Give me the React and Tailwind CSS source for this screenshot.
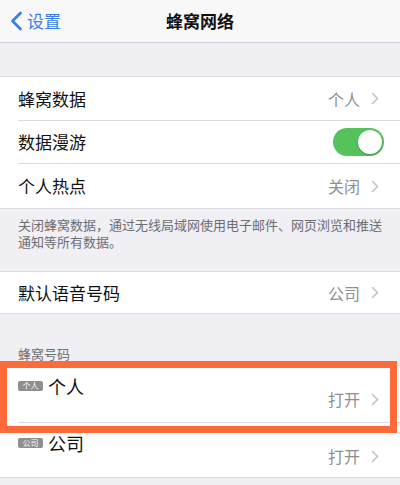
import React from 'react';

const font = { fontFamily: '"Noto Sans CJK SC", "Noto Sans", sans-serif' };

function Chevron() {
  return (
    <svg width="8" height="13" viewBox="0 0 8 13" className="ml-[11px]">
      <path d="M1.5 1.5 L6.5 6.5 L1.5 11.5" fill="none" stroke="#c4c4c8" strokeWidth="1.6" strokeLinecap="round" strokeLinejoin="round" />
    </svg>
  );
}

function Toggle() {
  return (
    <div className="w-[51px] h-[28px] rounded-full bg-[#55c25c] relative">
      <div className="absolute right-[2px] top-[2px] w-[24px] h-[24px] rounded-full bg-white shadow-[0_1px_2px_rgba(0,0,0,0.25)]" />
    </div>
  );
}

function Row({ label, value, toggle, last, height = 'h-[44px]' }) {
  return (
    <div className={`flex items-center pl-[18px] ${height}`}>
      <div className={`flex-1 flex items-center h-full ${toggle ? 'pr-[16px]' : 'pr-[21px]'} ${last ? '' : 'border-b border-[#dcdce0]'}`}>
        <span className="flex-1 text-[17px] text-[#111]">{label}</span>
        {toggle ? (
          <Toggle />
        ) : (
          <>
            <span className="text-[16px] text-[#8e8e93]">{value}</span>
            <Chevron />
          </>
        )}
      </div>
    </div>
  );
}

function LineRow({ tag, label, value, last, height }) {
  return (
    <div className={`pl-[18px] ${height}`}>
      <div className={`h-full pr-[21px] relative ${last ? '' : 'border-b border-[#dcdce0]'}`}>
        <div className="flex items-center pt-[9px]">
          <span className="w-[25px] h-[10px] rounded-[2px] bg-[#8e8e93] text-white text-[8px] leading-[10px] text-center mr-[5px]">{tag}</span>
          <span className="text-[18px] leading-[22px] text-[#111]">{label}</span>
        </div>
        <div className="absolute right-[21px] top-[22px] flex items-center">
          <span className="text-[16px] leading-[22px] text-[#8e8e93]">{value}</span>
          <Chevron />
        </div>
      </div>
    </div>
  );
}

export default function App() {
  return (
    <div className="w-[400px] h-[485px] bg-[#efeff4] overflow-hidden" style={font}>
      {/* nav bar */}
      <div className="h-[43px] bg-[#f8f8f8] border-b border-[#d0d0d4] flex items-center relative">
        <div className="flex items-center pl-[10px] text-[#3a7ee8]">
          <svg width="13" height="20" viewBox="0 0 13 20">
            <path d="M10.5 2 L2.5 10 L10.5 18" fill="none" stroke="#3a7ee8" strokeWidth="2.8" strokeLinecap="round" strokeLinejoin="round" />
          </svg>
          <span className="text-[17px] ml-[4px]">设置</span>
        </div>
        <span className="absolute left-0 right-0 text-center text-[17px] font-bold text-[#111] pointer-events-none">蜂窝网络</span>
      </div>

      <div className="h-[33px]" />

      <div className="bg-white border-y border-[#dcdce0]">
        <Row label="蜂窝数据" value="个人" />
        <Row label="数据漫游" toggle height="h-[43px]" />
        <Row label="个人热点" value="关闭" last />
      </div>

      <div className="pl-[18px] pr-[16px] pt-[7px] h-[62px] text-[13px] leading-[17px] text-[#6d6d72]">
        关闭蜂窝数据，通过无线局域网使用电子邮件、网页浏览和推送通知等所有数据。
      </div>

      <div className="bg-white border-y border-[#dcdce0]">
        <Row label="默认语音号码" value="公司" last height="h-[41px]" />
      </div>

      <div className="h-[51px] flex items-end pl-[18px] pb-[3px] text-[13px] leading-[17px] text-[#6d6d72]">
        蜂窝号码
      </div>

      <div className="relative bg-white border-y border-[#dcdce0]">
        <LineRow tag="个人" label="个人" value="打开" height="h-[57px]" />
        <LineRow tag="公司" label="公司" value="打开" last height="h-[54px]" />
        <div className="absolute left-0 top-[-5px] w-[397px] h-[72px] border-[7px] border-[#ff6a3a]" />
      </div>
    </div>
  );
}
